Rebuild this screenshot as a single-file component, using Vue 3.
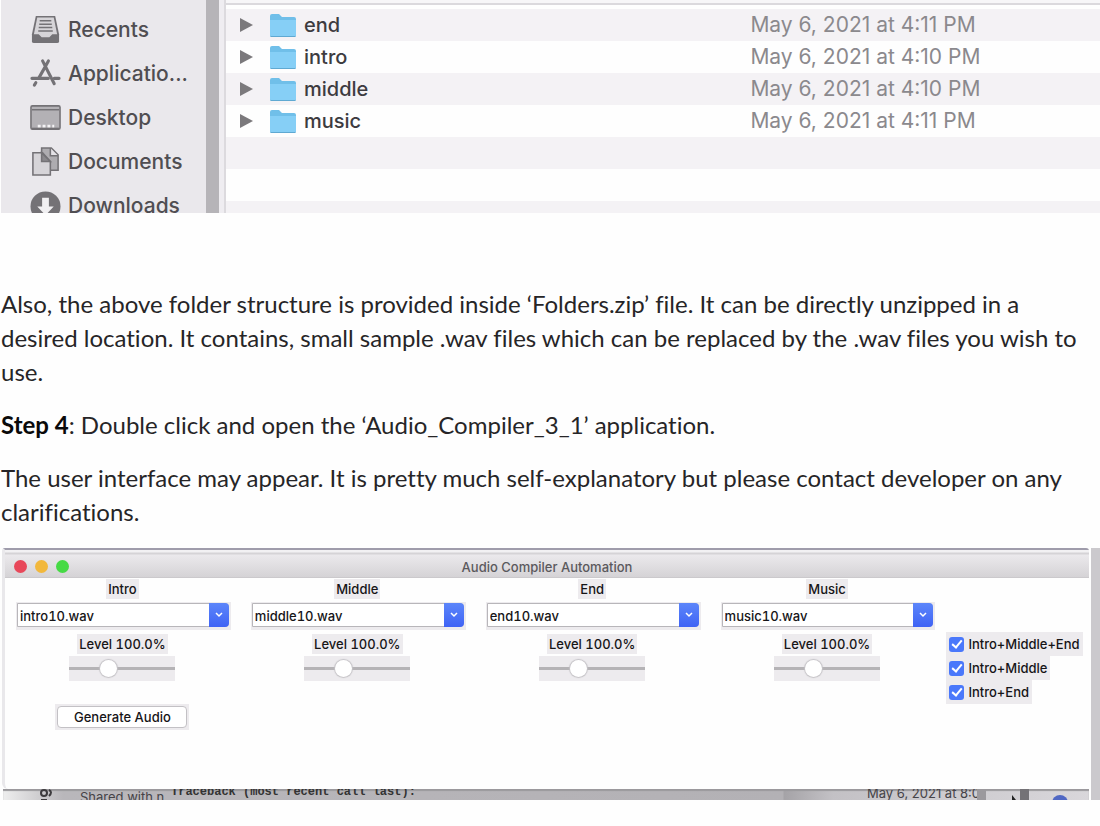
<script setup>
import { reactive } from 'vue'

const places = [
  { name: 'Recents', icon: 'recents' },
  { name: 'Applicatio...', icon: 'apps' },
  { name: 'Desktop', icon: 'desktop' },
  { name: 'Documents', icon: 'documents' },
  { name: 'Downloads', icon: 'downloads' },
]

const folders = [
  { name: 'end', date: 'May 6, 2021 at 4:11 PM' },
  { name: 'intro', date: 'May 6, 2021 at 4:10 PM' },
  { name: 'middle', date: 'May 6, 2021 at 4:10 PM' },
  { name: 'music', date: 'May 6, 2021 at 4:11 PM' },
]

const tracks = reactive([
  { id: 'intro', label: 'Intro', file: 'intro10.wav', level: 100 },
  { id: 'middle', label: 'Middle', file: 'middle10.wav', level: 100 },
  { id: 'end', label: 'End', file: 'end10.wav', level: 100 },
  { id: 'music', label: 'Music', file: 'music10.wav', level: 100 },
])

const mixes = reactive([
  { label: 'Intro+Middle+End', on: true },
  { label: 'Intro+Middle', on: true },
  { label: 'Intro+End', on: true },
])
</script>

<template>
  <main class="page">
    <section class="finder">
      <nav class="sidebar">
        <a v-for="p in places" :key="p.name" href="#" class="place">
          <svg class="place-icon" viewBox="0 0 32 32" aria-hidden="true">
            <g v-if="p.icon === 'recents'">
              <path d="M6 2h20l4 19v7q0 2-2 2H4q-2 0-2-2v-7z" fill="#747276" />
              <path d="M7.500 3.500h17L28 21h-5l-3 3h-8l-3-3H4z" fill="#d6d4d8" />
              <path d="M10 7h12M9.500 10.500h13M9 14h14M8.500 17.500h15" stroke="#747276" stroke-width="1.500" />
            </g>
            <g v-else-if="p.icon === 'apps'" fill="none" stroke="#747276" stroke-width="3.200" stroke-linecap="round">
              <path d="M13 3l12 23.500M19 3L9.500 20M6 25.500l-1.500 2.500" />
              <path d="M2 21h17M25 21h5" />
            </g>
            <g v-else-if="p.icon === 'desktop'">
              <rect x="1" y="4" width="30" height="24" rx="1.500" fill="#b3b1b5" stroke="#747276" stroke-width="1.600" />
              <path d="M2 8h28" stroke="#747276" stroke-width="1.500" />
              <path d="M8 25h3M13 25h3M18 25h3M23 25h2" stroke="#f4f3f5" stroke-width="3" />
              <path d="M2 27.500h28" stroke="#747276" stroke-width="2" />
            </g>
            <g v-else-if="p.icon === 'documents'" stroke="#747276" stroke-width="1.600">
              <path d="M12 2h10l7 7v16H12z" fill="#aeacb0" />
              <path d="M21 2v8h8" fill="#e4e2e6" />
              <path d="M3 7h10l8 9v14H3z" fill="#d6d4d8" />
              <path d="M12 7v9h9z" fill="#8a888c" />
            </g>
            <g v-else>
              <circle cx="16" cy="17" r="15.500" fill="#747276" />
              <path d="M12.500 8h7v9h5L16 26l-8.500-9h5z" fill="#f1f0f2" />
            </g>
          </svg>
          <span>{{ p.name }}</span>
        </a>
      </nav>
      <div class="divider"></div>
      <div class="listing">
        <div class="list-head"></div>
        <table class="files">
          <tbody>
            <tr v-for="f in folders" :key="f.name">
              <td class="name-cell">
                <div class="name">
                  <svg class="arrow" viewBox="0 0 13 14" aria-hidden="true"><path d="M0 0l13 7-13 7z" fill="#7b797c" /></svg>
                  <svg class="folder" viewBox="0 0 28 25" aria-hidden="true">
                    <path d="M1 3q0-2 2-2h7l3 3h12q2 0 2 2v16q0 2-2 2H3q-2 0-2-2z" fill="#70bfe9" />
                    <path d="M1 7h26v14.500q0 1.500-1.500 1.500h-23Q1 23 1 21.500z" fill="#86cff6" />
                    <path d="M1.500 23.500h25" stroke="#5fa9d2" />
                  </svg>
                  <span>{{ f.name }}</span>
                </div>
              </td>
              <td class="date">{{ f.date }}</td>
            </tr>
            <tr><td colspan="2"></td></tr>
            <tr><td colspan="2"></td></tr>
            <tr><td colspan="2"></td></tr>
          </tbody>
        </table>
      </div>
    </section>

    <article class="prose">
      <p>
        Also, the above folder structure is provided inside ‘Folders.zip’ file. It can be directly unzipped in a<br />
        desired location. It contains, small sample .wav files which can be replaced by the .wav files you wish to<br />
        use.
      </p>
      <p><strong>Step 4</strong>: Double click and open the ‘Audio_Compiler_3_1’ application.</p>
      <p>
        The user interface may appear. It is pretty much self-explanatory but please contact developer on any<br />
        clarifications.
      </p>
    </article>

    <section class="shot">
      <div class="desk">
        <div class="window">
          <header class="titlebar">
            <div class="lights"><i class="red"></i><i class="amber"></i><i class="green"></i></div>
            <h1>Audio Compiler Automation</h1>
          </header>
          <form class="controls" @submit.prevent>
            <div v-for="t in tracks" :key="t.id" class="track">
              <label class="tag" :for="t.id + '-file'">{{ t.label }}</label>
              <div class="combo">
                <select :id="t.id + '-file'" v-model="t.file">
                  <option>{{ t.file }}</option>
                </select>
                <span class="combo-arrow">
                  <svg viewBox="0 0 8 6" aria-hidden="true"><path d="M1 1l3 3 3-3" fill="none" stroke="#fff" stroke-width="1.500" /></svg>
                </span>
              </div>
              <label class="tag" :for="t.id + '-level'">Level {{ t.level.toFixed(1) }}%</label>
              <input :id="t.id + '-level'" v-model.number="t.level" class="slider" type="range" min="0" max="290" />
            </div>
            <div class="mixes">
              <label v-for="m in mixes" :key="m.label" class="mix">
                <input v-model="m.on" type="checkbox" />
                <span>{{ m.label }}</span>
              </label>
            </div>
            <div class="action"><button type="submit">Generate Audio</button></div>
          </form>
        </div>
        <div class="behind">
          <svg class="people" viewBox="0 0 16 11" aria-hidden="true">
            <g fill="none" stroke="#3d3b3e" stroke-width="2">
              <circle cx="6" cy="4" r="3" />
              <path d="M11 1q4 2 0 6" />
              <path d="M3 10.500h6" stroke-width="1" />
            </g>
          </svg>
          <span class="shared">Shared with n</span>
          <span class="trace">Traceback (most recent call last):</span>
          <span class="stamp">May 6, 2021 at 8:0</span>
          <i class="bar"></i>
          <svg class="pointer" viewBox="0 0 6 11" aria-hidden="true"><path d="M1 6l4 5H1z" fill="#222" /></svg>
          <i class="bar dark"></i>
          <svg class="ball" viewBox="0 0 16 11" aria-hidden="true"><circle cx="8" cy="14" r="8" fill="#5068c4" /></svg>
        </div>
      </div>
      <div class="page-scroll"></div>
    </section>
  </main>
</template>

<style>
body {
  margin: 0;
  background: #fefefe;
}
</style>

<style scoped>
.page {
  font-family: Inter, "Liberation Sans", sans-serif;
  color: #262527;
  overflow: hidden;
}
.finder {
  display: flex;
  height: 213px;
  overflow: hidden;
  padding-left: 1px;
}
.sidebar {
  flex: 0 0 205px;
  box-sizing: border-box;
  padding: 7px 0 0 29px;
  background: #eae8ec;
}
.place {
  display: flex;
  align-items: center;
  gap: 7px;
  height: 44px;
  font-size: 21px;
  font-weight: 500;
  color: #504e52;
  text-decoration: none;
  white-space: nowrap;
}
.place-icon {
  width: 31px;
  height: 31px;
}
.divider {
  flex: 0 0 13px;
  background: #b6b4b8;
  border-right: 5px solid #efedf1;
}
.listing {
  flex: 1;
  border-left: 2px solid #dcdade;
  background: #fefefe;
}
.list-head {
  height: 3px;
  background: #f7f6f8;
  border-bottom: 2px solid #dbd9dd;
  margin-bottom: 4px;
}
.files {
  width: 100%;
  border-collapse: collapse;
  table-layout: fixed;
}
.files tr {
  height: 32px;
}
.files tr:nth-child(odd) {
  background: #f4f2f5;
}
.files td {
  padding: 0;
  font-size: 21px;
  line-height: 30px;
  white-space: nowrap;
}
.name-cell {
  width: 60%;
}
.name {
  display: flex;
  align-items: center;
  padding-left: 14px;
  font-size: 20px;
  font-weight: 500;
  color: #3d3b3f;
}
.arrow {
  width: 13px;
  height: 14px;
  margin-right: 16px;
}
.folder {
  width: 28px;
  height: 25px;
  margin-right: 7px;
}
.date {
  color: #8b898d;
}
.prose {
  padding: 74px 0 19px 1px;
  font-family: Lato, "Open Sans", sans-serif;
  font-size: 24px;
  line-height: 34px;
  font-variant-ligatures: none;
  white-space: nowrap;
}
.prose p {
  margin: 0 0 19px;
}
.prose p:last-child {
  margin: 0;
}
.prose strong {
  color: #0a0a0a;
}
.shot {
  display: flex;
  gap: 2px;
}
.desk {
  flex: 1;
  padding-left: 2px;
  background: #fefefe;
}
.page-scroll {
  flex: 0 0 9px;
  background: #cbc9cd;
}
.window {
  border-top: 2px solid #9f9cab;
  border-left: 3px solid #e9e8eb;
  border-radius: 3px 3px 0 6px;
}
.titlebar {
  display: grid;
  grid-template-columns: 1fr auto 1fr;
  align-items: center;
  height: 27px;
  border-bottom: 1px solid #cbc9cc;
  background: linear-gradient(#f2f1f3 0 2px, #d5d3d6 3px 4px, #ebe9ec 5px, #d5d3d6);
}
.titlebar h1 {
  margin: 0;
  padding-top: 6px;
  font-size: 13px;
  line-height: 20px;
  font-weight: 500;
  color: #5b595d;
}
.lights {
  display: flex;
  gap: 8px;
  padding: 6px 0 0 9px;
}
.lights i {
  width: 13px;
  height: 13px;
  border-radius: 50%;
}
.red {
  background: #e8485a;
}
.amber {
  background: #f2b83c;
}
.green {
  background: #46da45;
}
.controls {
  display: grid;
  grid-template-columns: repeat(4, minmax(0, 13fr)) minmax(0, 8fr);
  height: 211px;
  align-content: start;
  font-size: 13px;
  font-weight: 500;
  font-variant-numeric: tabular-nums;
  color: #161517;
}
.track {
  display: flex;
  flex-direction: column;
  align-items: center;
}
.tag {
  margin-top: 1px;
  padding: 0 2px;
  line-height: 20px;
  background: #edebee;
}
.combo {
  position: relative;
  box-sizing: border-box;
  align-self: stretch;
  margin: 3px 9px 3px 11px;
  padding: 1px 2px 3px 1px;
  background: #edebee;
}
.combo select {
  display: block;
  box-sizing: border-box;
  width: 100%;
  height: 24px;
  padding: 2px 20px 0 2px;
  border: 1px solid #b8b6ba;
  border-radius: 0 4px 4px 0;
  appearance: none;
  background: #fff;
  font: inherit;
  font-variant-numeric: tabular-nums;
  color: inherit;
}
.combo-arrow {
  position: absolute;
  top: 1px;
  right: 2px;
  display: flex;
  align-items: center;
  justify-content: center;
  width: 20px;
  height: 24px;
  border-radius: 0 4px 4px 0;
  background: linear-gradient(#5c86fa, #3f63f5);
  pointer-events: none;
}
.combo-arrow svg {
  width: 8px;
  height: 6px;
}
.slider {
  width: 106px;
  height: 25px;
  margin: 2px 0 0;
  appearance: none;
  background: #edebee;
}
.slider::-webkit-slider-runnable-track {
  height: 3px;
  background: #b5b3b6;
}
.slider::-webkit-slider-thumb {
  appearance: none;
  width: 17px;
  height: 17px;
  margin-top: -7px;
  border-radius: 50%;
  background: #fff;
  box-shadow: 0 0 1px 1px #c4c2c6;
}
.mixes {
  display: flex;
  flex-direction: column;
  align-items: flex-start;
  padding: 54px 0 0 2px;
}
.mix {
  display: flex;
  align-items: center;
  gap: 4px;
  height: 24px;
  padding: 0 3px;
  background: #edebee;
  white-space: nowrap;
}
.mix input {
  display: grid;
  place-items: center;
  width: 15px;
  height: 15px;
  margin: 0;
  border-radius: 3px;
  appearance: none;
  background: #d8d6da;
}
.mix input:checked {
  background: #4a78fb;
}
.mix input:checked::after {
  content: "";
  width: 4px;
  height: 8px;
  margin-bottom: 2px;
  border: solid #fff;
  border-width: 0 2px 2px 0;
  transform: rotate(40deg);
}
.action {
  justify-self: center;
  padding: 2px;
  background: #edebee;
}
.action button {
  display: block;
  width: 130px;
  height: 22px;
  padding: 0;
  border: 1px solid #c3c1c5;
  border-radius: 4px;
  background: #fff;
  font: inherit;
  color: inherit;
}
.behind {
  display: flex;
  align-items: flex-start;
  height: 11px;
  margin-left: 1px;
  overflow: hidden;
  background: linear-gradient(90deg, #eee 0, #b9b7bb 60px, #b3b1b5 780px, #a5a3a7 781px, #c3c1c5 830px, #d9d7db);
  box-shadow: inset 0 2px 1px #9b999d;
  font-size: 13px;
  color: #454347;
  white-space: nowrap;
}
.people {
  width: 16px;
  height: 11px;
  margin: 0 26px 0 35px;
}
.shared {
  width: 85px;
  line-height: 17px;
}
.trace {
  padding-left: 6px;
  font: 700 12px/7px "Liberation Mono", monospace;
  color: #333;
}
.stamp {
  width: 109px;
  margin-left: auto;
  line-height: 8px;
}
.bar {
  width: 9px;
  height: 11px;
  margin: 0 25px 0 1px;
  background: #9b999d;
}
.bar.dark {
  margin: 0 23px 0 3px;
  background: #747276;
}
.pointer {
  width: 6px;
  height: 11px;
}
.ball {
  width: 16px;
  height: 11px;
  margin-right: 21px;
}
</style>
